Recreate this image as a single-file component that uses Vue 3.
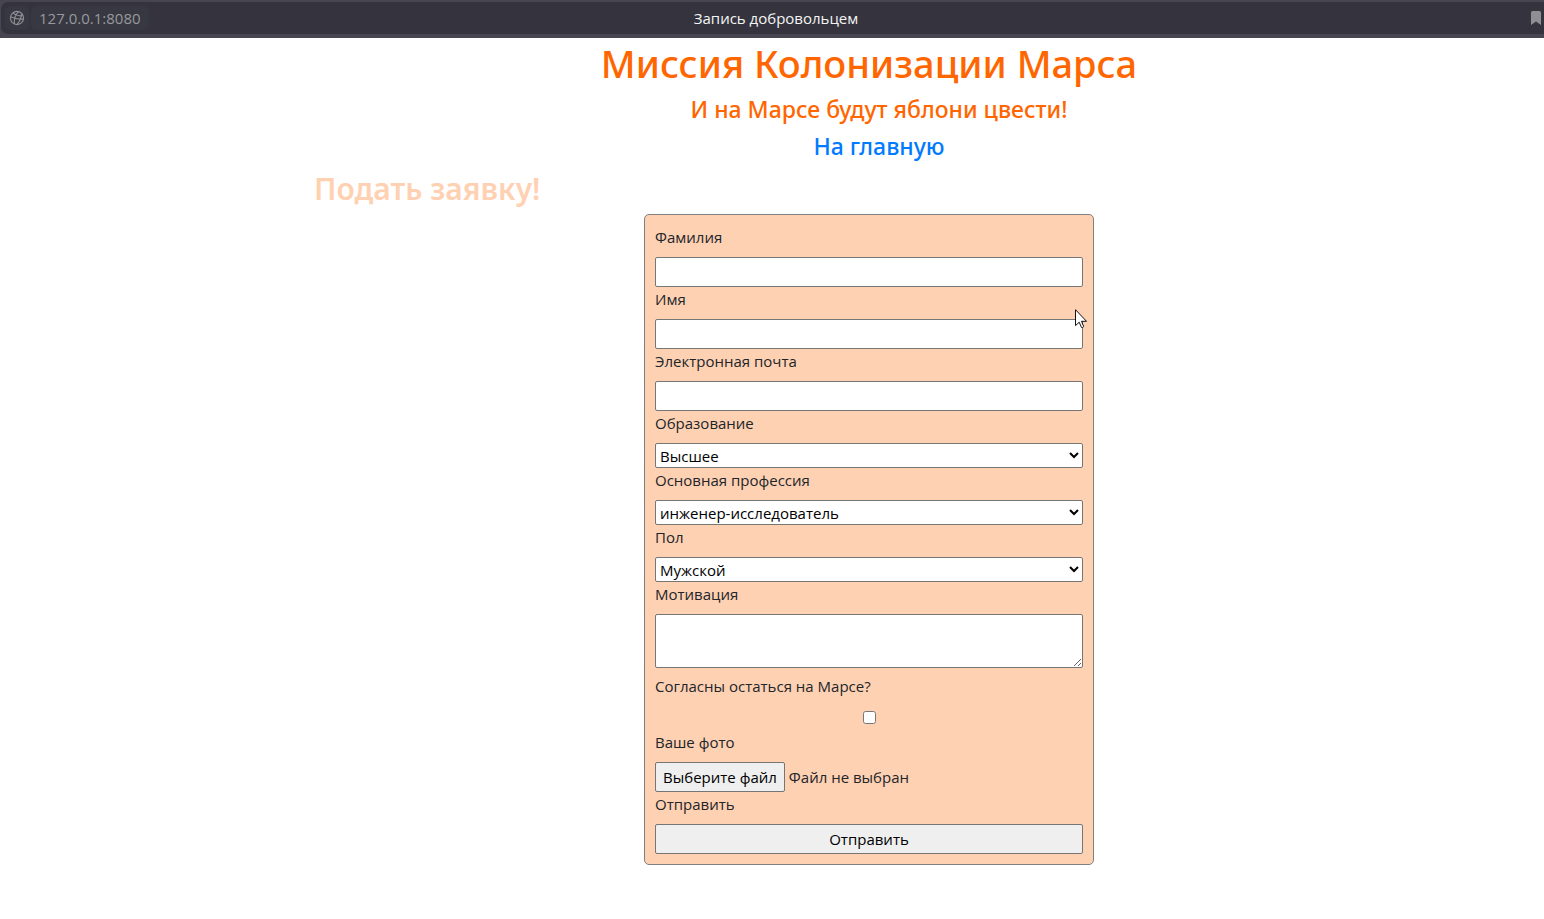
<script setup>
import { ref } from 'vue'

const form = ref({
  surname: '',
  name: '',
  email: '',
  education: 'Высшее',
  profession: 'инженер-исследователь',
  sex: 'Мужской',
  motivation: '',
  stay: false,
})

const educations = ['Начальное', 'Среднее', 'Высшее']
const professions = ['инженер-исследователь', 'пилот', 'строитель', 'врач', 'метеоролог']
const sexes = ['Мужской', 'Женский']

const fileInput = ref(null)
const fileName = ref('Файл не выбран')

function pickFile() {
  fileInput.value.click()
}
function onFile(event) {
  fileName.value = event.target.files[0]?.name ?? 'Файл не выбран'
}
</script>

<template>
  <div class="page">
    <header class="browser">
      <div class="bar">
        <div class="address">
          <button class="site" type="button" aria-label="Сведения о сайте">
            <svg width="16" height="16" viewBox="0 0 16 16" fill="none" stroke="currentColor" stroke-width="1.1">
              <circle cx="8" cy="8" r="6.6" />
              <path d="M9.500 1.600C6.500 4.500 4.800 9 5.300 14M12.600 3.300C12.300 7.500 10.800 11.500 8 14.500M1.600 6.800C5.500 8.800 10 9.500 14.500 9M4 2.800C6.500 5 9.800 6 13.800 5.800" />
            </svg>
          </button>
          <span class="url">127.0.0.1:8080</span>
        </div>
        <span class="title">Запись добровольцем</span>
        <button class="bookmark" type="button" aria-label="Добавить в закладки">
          <svg width="10" height="14" viewBox="0 0 10 14" fill="currentColor">
            <path d="M1.500 0h7A1.500 1.500 0 0 1 10 1.500V14L5 10.500 0 14V1.500A1.500 1.500 0 0 1 1.500 0z" />
          </svg>
        </button>
      </div>
    </header>

    <main class="container">
      <h1>Миссия Колонизации Марса</h1>
      <h4>И на Марсе будут яблони цвести!</h4>
      <h4><a href="#">На главную</a></h4>
      <h2>Подать заявку!</h2>

      <form class="login-form" @submit.prevent>
        <label for="surname">Фамилия</label>
        <input id="surname" v-model="form.surname" class="field" type="text">

        <label for="name">Имя</label>
        <div class="pointed">
          <input id="name" v-model="form.name" class="field" type="text">
          <svg class="cursor" width="13" height="21" viewBox="0 0 13 21" aria-hidden="true">
            <path d="M.5.7V16.600L4.200 13.200L6.500 18.500Q7.700 19 8.700 17.600L6.500 12.300H11.500Z" fill="#fff" stroke="#111" stroke-width="1" />
          </svg>
        </div>

        <label for="email">Электронная почта</label>
        <input id="email" v-model="form.email" class="field" type="email">

        <label for="education">Образование</label>
        <select id="education" v-model="form.education">
          <option v-for="item in educations" :key="item">{{ item }}</option>
        </select>

        <label for="profession">Основная профессия</label>
        <select id="profession" v-model="form.profession">
          <option v-for="item in professions" :key="item">{{ item }}</option>
        </select>

        <label for="sex">Пол</label>
        <select id="sex" v-model="form.sex">
          <option v-for="item in sexes" :key="item">{{ item }}</option>
        </select>

        <label for="motivation">Мотивация</label>
        <textarea id="motivation" v-model="form.motivation"></textarea>

        <label for="stay">Согласны остаться на Марсе?</label>
        <div class="check">
          <input id="stay" v-model="form.stay" type="checkbox">
        </div>

        <label for="photo">Ваше фото</label>
        <div class="file">
          <input id="photo" ref="fileInput" type="file" hidden @change="onFile">
          <button class="button" type="button" @click="pickFile">Выберите файл</button>
          <span>{{ fileName }}</span>
        </div>

        <label for="send">Отправить</label>
        <button id="send" class="button" type="submit">Отправить</button>
      </form>
    </main>
  </div>
</template>

<style>
body {
  margin: 0;
  background: #fff;
}
</style>

<style scoped>
.page,
.page * {
  box-sizing: border-box;
}
.page {
  font-family: "Open Sans", "Noto Sans", sans-serif;
  font-size: 15px;
  line-height: 24px;
  color: #212529;
}
.browser {
  padding: 2px 0 4px;
  background: #474650;
}
.bar {
  display: grid;
  grid-template-columns: 1fr auto 1fr;
  align-items: center;
  height: 32px;
  margin-left: 1px;
  padding: 0 3px 0 4px;
  border-radius: 7px 0 0 7px;
  background: #35343e;
}
.address {
  display: flex;
  align-items: center;
  gap: 2px;
}
.site,
.bookmark {
  display: flex;
  align-items: center;
  justify-content: center;
  padding: 0;
  border: 0;
  background: none;
  color: #8e8e95;
}
.site {
  width: 24px;
  height: 24px;
  border-radius: 6px;
  background: #373841;
}
.bookmark {
  justify-self: end;
}
.url {
  padding: 0 8px;
  border-radius: 6px;
  background: #373841;
  color: #98989e;
}
.title {
  padding-left: 6px;
  color: #f4f4f5;
}
.container {
  padding: 1px 120px 54px 314px;
}
h1,
h2,
h4 {
  margin: 0 0 8px;
  font-family: "Noto Sans", "Open Sans", sans-serif;
  font-weight: 500;
}
h1 {
  font-size: 38px;
  line-height: 48px;
  color: #ff6600;
  text-align: center;
}
h4 {
  padding-left: 20px;
  font-size: 23px;
  line-height: 29px;
  color: #ff6600;
  text-align: center;
}
h4 a {
  color: #007bff;
  text-decoration: none;
}
h2 {
  margin-bottom: 5px;
  font-size: 30px;
  line-height: 40px;
  font-weight: 600;
  color: #ffd1b3;
}
.login-form {
  display: flex;
  flex-direction: column;
  max-width: 450px;
  margin: 0 auto;
  padding: 10px;
  border: 1px solid #808080;
  border-radius: 5px;
  background: #ffd1b3;
}
label {
  margin-bottom: 8px;
}
.field,
select,
textarea,
.button {
  display: block;
  width: 100%;
  margin: 0;
  border: 1px solid #767676;
  border-radius: 2px;
  font: inherit;
  color: #000;
}
.field {
  height: 30px;
  padding: 1px 2px;
  background: #fff;
}
select {
  height: 25px;
  padding: 0;
  background-color: #fff;
}
textarea {
  height: 54px;
  margin-bottom: 6px;
  padding: 2px;
  background: #fff;
  resize: vertical;
}
.check {
  display: flex;
  justify-content: center;
  height: 24px;
  padding-top: 5px;
}
.check input {
  width: 13px;
  height: 13px;
  margin: 0;
}
.button {
  height: 30px;
  padding: 1px 7px;
  background: #efefef;
}
.file {
  display: flex;
  align-items: center;
  gap: 4px;
}
.file .button {
  width: auto;
}
.pointed {
  position: relative;
}
.cursor {
  position: absolute;
  top: -10px;
  right: -5px;
}
</style>
